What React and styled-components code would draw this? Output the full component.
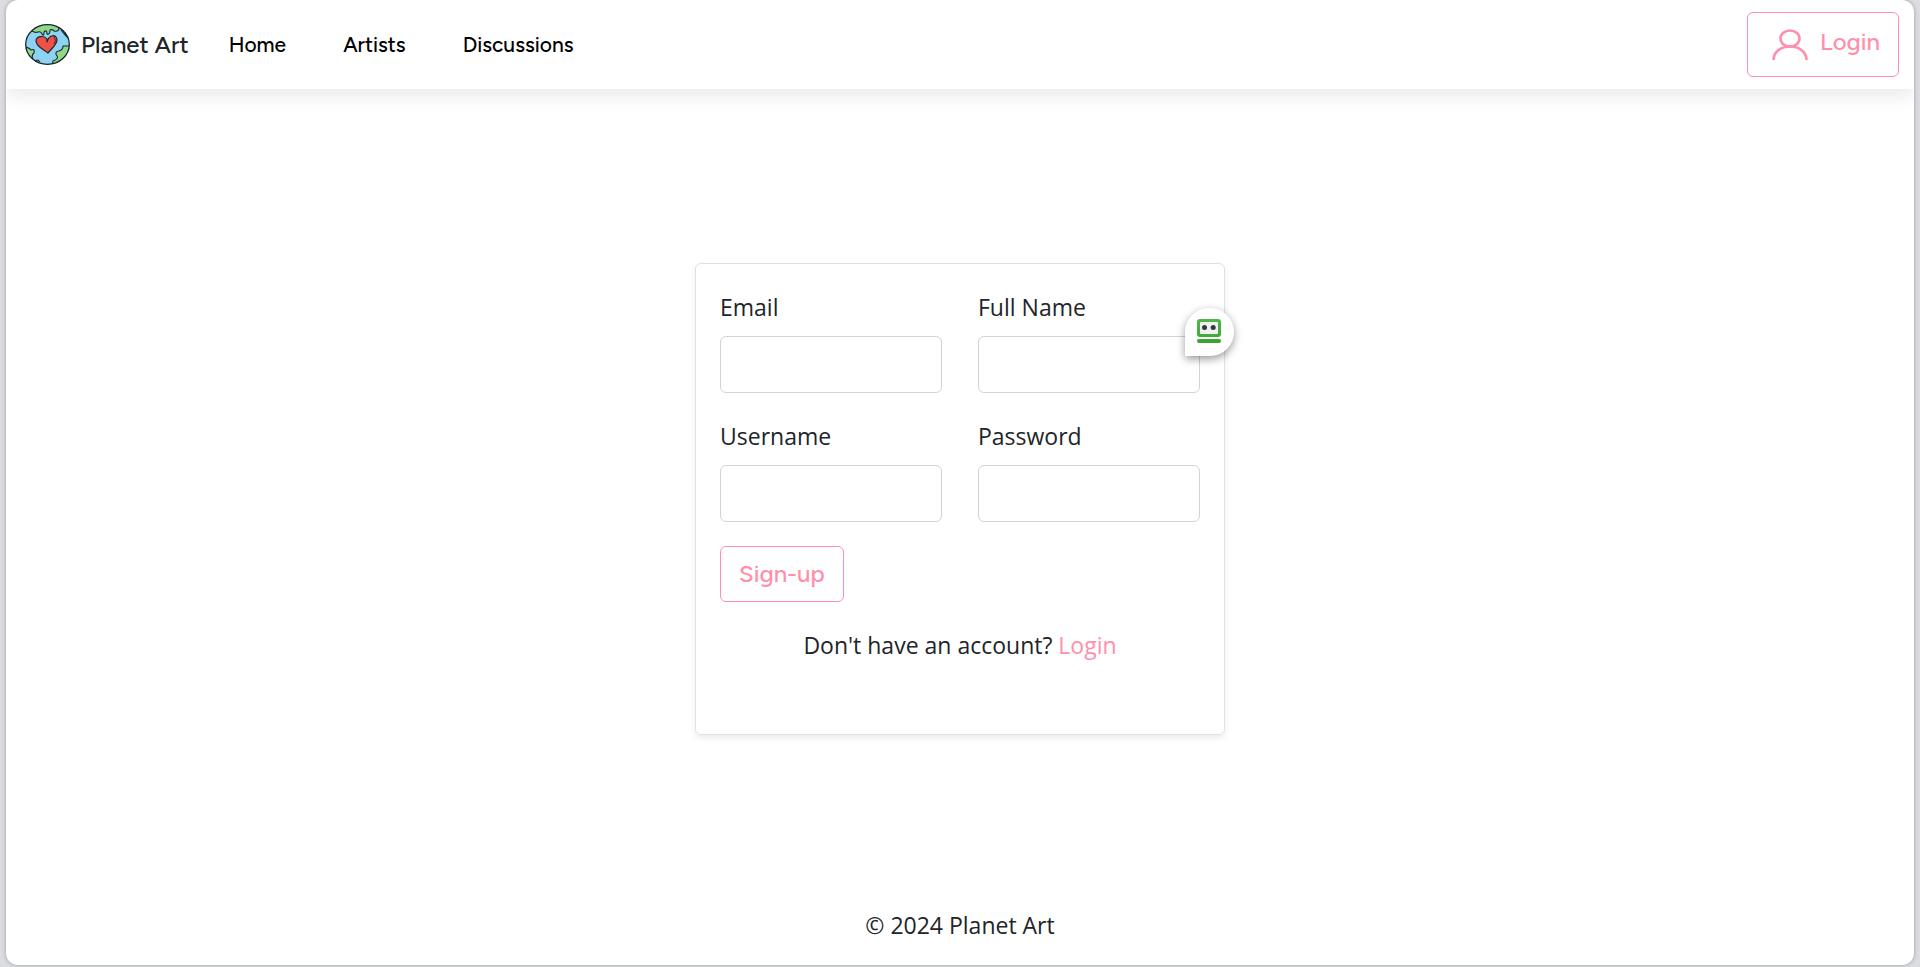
import React from "react";
import styled, { createGlobalStyle } from "styled-components";

const display = `"Figtree", "Lato", "Inter", sans-serif`;
const pink = "#ff8fab";

const GlobalStyle = createGlobalStyle`
  * { box-sizing: border-box; }
  body {
    margin: 0;
    background: #dcdde1;
    color: #212529;
    font: 400 23px/38px "Segoe UI", "Open Sans", "Noto Sans", sans-serif;
  }
`;

const Backdrop = styled.div`
  min-height: 100vh;
  padding: 0 6px 2px;
  display: flex;
`;

const Page = styled.div`
  flex: 1;
  display: flex;
  flex-direction: column;
  background: #fff;
  border-radius: 12px;
  overflow: hidden;
  box-shadow: 0 0 4px rgba(0, 0, 0, 0.3);
`;

const Header = styled.header`
  height: 89px;
  padding: 0 15px 0 19px;
  display: flex;
  align-items: center;
  box-shadow: 0 8px 16px rgba(0, 0, 0, 0.08);
`;

const Brand = styled.a`
  display: flex;
  align-items: center;
  gap: 11px;
  color: #212529;
  text-decoration: none;
  font: 500 24px/36px ${display};
`;

const Nav = styled.nav`
  margin-left: 40px;
  display: flex;
  gap: 57px;
`;

const NavLink = styled.a`
  color: #000;
  text-decoration: none;
  font: 500 21px/36px ${display};
`;

const OutlineButton = styled.button`
  height: ${(p) => (p.$large ? 65 : 56)}px;
  padding: ${(p) => (p.$large ? "0 18px 6px 23px" : "0 18px")};
  margin-left: ${(p) => (p.$large ? "auto" : "0")};
  display: inline-flex;
  align-items: center;
  gap: 11px;
  border: 1px solid ${pink};
  border-radius: 6px;
  background: transparent;
  color: ${pink};
  cursor: pointer;
  font: 500 24px/36px ${display};
`;

const UserIcon = styled.svg`
  width: 38px;
  height: 32px;
  margin-top: 6px;
`;

const Main = styled.main`
  flex: 1;
  padding-top: 3px;
  display: flex;
  align-items: center;
  justify-content: center;
`;

const Card = styled.form`
  width: 530px;
  padding: 24px 24px 70px;
  border: 1px solid #dee2e6;
  border-radius: 6px;
  box-shadow: 0 3px 6px rgba(0, 0, 0, 0.08);
`;

const Fields = styled.div`
  display: grid;
  grid-template-columns: 1fr 1fr;
  gap: 24px 36px;
  margin-bottom: 24px;
`;

const Field = styled.div`
  position: relative;
  display: flex;
  flex-direction: column;
  gap: 10px;
`;

const Input = styled.input`
  width: 100%;
  height: 57px;
  padding: 9px 18px;
  border: 1px solid #ced4da;
  border-radius: 6px;
  background: #fff;
  color: inherit;
  font: inherit;
`;

const Prompt = styled.p`
  margin: 24px 0 0;
  text-align: center;
`;

const PinkLink = styled.a`
  color: ${pink};
  text-decoration: none;
`;

const HelperBadge = styled.span`
  position: absolute;
  top: 20px;
  right: -34px;
  width: 49px;
  height: 48px;
  padding: 0 1px 2px 0;
  display: grid;
  place-items: center;
  background: #fff;
  border-radius: 24px 24px 24px 0;
  box-shadow: 0 3px 9px rgba(0, 0, 0, 0.4);
`;

const Footer = styled.footer`
  padding-bottom: 21px;
  text-align: center;
`;

function PlanetLogo() {
  return (
    <svg width="45" height="42" viewBox="0 0 45 42" aria-hidden="true">
      <defs>
        <clipPath id="globe">
          <ellipse cx="22.5" cy="20.5" rx="21.8" ry="19.8" />
        </clipPath>
      </defs>
      <g clipPath="url(#globe)" stroke="#17262b" strokeWidth="1.1" strokeLinejoin="round">
        <rect width="45" height="42" fill="#8ed3f4" stroke="none" />
        <path d="M7 7 Q10 9 13 8 Q16 7 17 10 Q19 13 19 8 Q22 5 22 10 Q25 11 25 6 Q28 5 29 7 Q33 8 34 5 L32 -1 H9 Z" fill="#91d989" />
        <path d="M-1 23 Q5 24 6 26 Q10 24 9 29 Q6 31 8 35 L10 38 L-1 42 Z" fill="#91d989" />
        <path d="M46 22 Q42 22 38 22 Q38 26 34 27 Q29 28 32 32 Q34 35 28 37 L27 42 H46 Z" fill="#91d989" />
        <path d="M36 6 Q39 10 42 13 M38 6 L43 14 M10 38 Q12 34 15 38" fill="none" />
      </g>
      <ellipse cx="22.5" cy="20.5" rx="21.8" ry="19.8" fill="none" stroke="#17262b" strokeWidth="1.3" />
      <path d="M22 15 C19 11 11 12 11 17 C11 23 20 26 23 29 C25 26 32 21 32 16 C32 10 24 10 22 18 Z" fill="#ef5148" stroke="#17262b" strokeWidth="1.2" strokeLinejoin="round" />
      <path d="M29 13 Q32 16 29 20" fill="none" stroke="#17262b" strokeWidth="0.8" />
    </svg>
  );
}

function RobotIcon() {
  return (
    <svg width="24" height="24" viewBox="0 0 24 24" aria-hidden="true">
      <defs>
        <linearGradient id="robot" x2="0" y2="1">
          <stop stopColor="#4fb848" />
          <stop offset="1" stopColor="#42a83a" />
        </linearGradient>
      </defs>
      <rect width="24" height="18" rx="3" fill="url(#robot)" />
      <rect x="3" y="3" width="18" height="12" rx="1" fill="#f0f0f3" />
      <circle cx="7.5" cy="8.5" r="2.5" fill="#35373c" />
      <circle cx="16.2" cy="8.5" r="2.5" fill="#35373c" />
      <rect y="20" width="24" height="4" rx="2" fill="#38a52e" />
    </svg>
  );
}

const fields = [
  { id: "email", label: "Email", type: "email" },
  { id: "fullName", label: "Full Name", type: "text", helper: true },
  { id: "username", label: "Username", type: "text" },
  { id: "password", label: "Password", type: "password" },
];

export default function App() {
  return (
    <Backdrop>
      <GlobalStyle />
      <Page>
        <Header>
          <Brand href="#home">
            <PlanetLogo />
            Planet Art
          </Brand>
          <Nav>
            <NavLink href="#home">Home</NavLink>
            <NavLink href="#artists">Artists</NavLink>
            <NavLink href="#discussions">Discussions</NavLink>
          </Nav>
          <OutlineButton type="button" $large>
            <UserIcon viewBox="0 0 38 32" fill="none" stroke="currentColor" strokeWidth="2.6" aria-hidden="true">
              <ellipse cx="19" cy="9.5" rx="9.5" ry="8" />
              <path d="M2.5 31 C3 13 35 13 35.5 31" />
            </UserIcon>
            Login
          </OutlineButton>
        </Header>
        <Main>
          <Card>
            <Fields>
              {fields.map((f) => (
                <Field key={f.id}>
                  <label htmlFor={f.id}>{f.label}</label>
                  <Input id={f.id} name={f.id} type={f.type} />
                  {f.helper && (
                    <HelperBadge>
                      <RobotIcon />
                    </HelperBadge>
                  )}
                </Field>
              ))}
            </Fields>
            <OutlineButton type="submit">Sign-up</OutlineButton>
            <Prompt>
              Don't have an account? <PinkLink href="#login">Login</PinkLink>
            </Prompt>
          </Card>
        </Main>
        <Footer>© 2024 Planet Art</Footer>
      </Page>
    </Backdrop>
  );
}
